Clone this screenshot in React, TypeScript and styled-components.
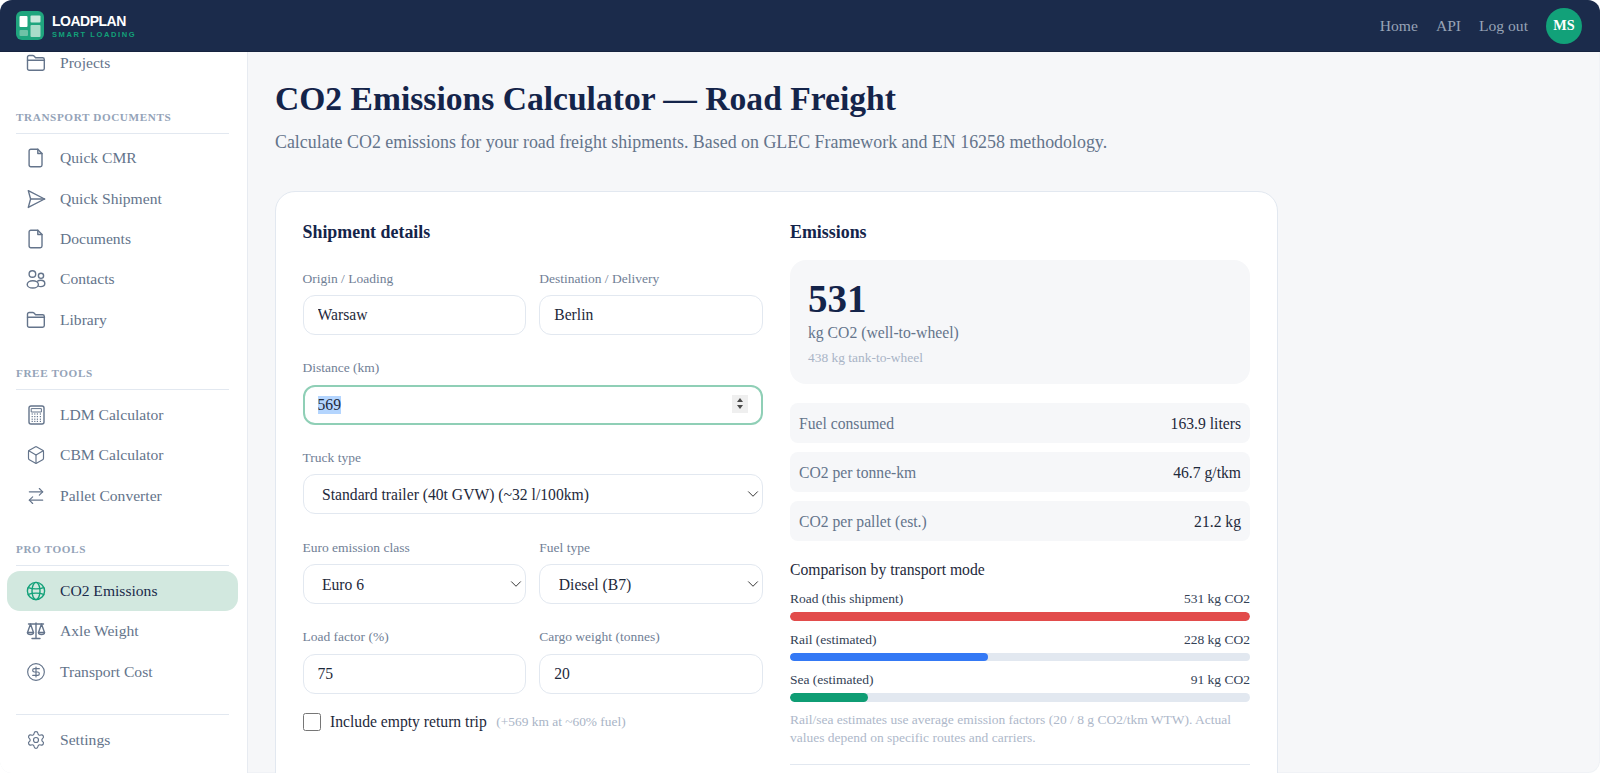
import React, { useEffect, useRef } from 'react'
import styled, { createGlobalStyle } from 'styled-components'
import { ArrowRightLeft, Box, ChevronDown, CircleDollarSign, Settings } from 'lucide-react'

const GlobalStyle = createGlobalStyle`
html, body {
  margin: 0;
  padding: 0;
  height: 100%;
  background: #ffffff;
}
* {
  box-sizing: border-box;
}
::selection {
  background: #b4d5fe;
}
`

const serif = `"Liberation Serif", "Times New Roman", serif`

const Frame = styled.div`
height: 100vh;
display: flex;
flex-direction: column;
overflow: hidden;
border-radius: 12px;
font-family: ${serif};
background: #f6f7f9;
box-shadow: inset 0 0 0 1px rgba(226, 232, 240, 0.3);
`

const TopBar = styled.header`
height: 52px;
flex-shrink: 0;
display: flex;
align-items: center;
justify-content: space-between;
padding: 0 18px 0 16px;
background: #1b2b4b;
border-bottom: 1px solid #16233f;
`

const Brand = styled.div`
display: flex;
align-items: center;
gap: 8px;
`

const BrandText = styled.div`
display: flex;
flex-direction: column;
padding-top: 1px;
font-family: "Liberation Sans", Arial, sans-serif;
`

const BrandName = styled.span`
font-size: 14px;
line-height: 16px;
font-weight: 700;
letter-spacing: -0.5px;
color: #ffffff;
`

const BrandTag = styled.span`
font-size: 7.5px;
line-height: 10px;
margin-top: 1px;
font-weight: 700;
letter-spacing: 1.6px;
color: #12a179;
`

const TopNav = styled.nav`
display: flex;
align-items: center;
gap: 18px;
`

const TopLink = styled.a`
font-size: 15.6px;
color: #97a3b6;
`

const Avatar = styled.div`
width: 36px;
height: 36px;
border-radius: 50%;
display: flex;
align-items: center;
justify-content: center;
background: #12a179;
color: #ffffff;
font-size: 14.3px;
font-weight: 700;
`

const Body = styled.div`
flex: 1;
min-height: 0;
display: flex;
overflow: hidden;
`

const Sidebar = styled.aside`
width: 248px;
flex-shrink: 0;
background: #ffffff;
border-right: 1px solid #e7ebf1;
padding-top: 0;
margin-top: -9px;
`

const SectionTitle = styled.div`
margin: 25.6px 18px 4.8px 16px;
padding-bottom: 8px;
border-bottom: 1px solid #e2e8f0;
font-size: 11.2px;
line-height: 16px;
font-weight: 700;
letter-spacing: 0.6px;
text-transform: uppercase;
color: #94a3b8;
`

const NavItem = styled.div<{ $active?: boolean }>`
height: 40px;
margin: 0 9px 0.3px 7px;
padding-left: 19px;
display: flex;
align-items: center;
gap: 14px;
border-radius: 13px;
font-size: 15.6px;
background: ${({ $active }) => ($active ? '#d2e8df' : 'transparent')};
color: ${({ $active }) => ($active ? '#1b2b4b' : '#64748b')};
svg {
  color: ${({ $active }) => ($active ? '#12a179' : '#64748b')};
  flex-shrink: 0;
}
`

const SideDivider = styled.div`
height: 1px;
margin: 22px 18px 5.5px 16px;
background: #e2e8f0;
`

const Main = styled.main`
flex: 1;
min-width: 0;
padding: 27px 0 0 27px;
overflow: hidden;
`

const Title = styled.h1`
margin: 0;
font-size: 33.6px;
line-height: 39px;
font-weight: 700;
color: #14244a;
`

const Subtitle = styled.p`
margin: 12px 0 0;
font-size: 17.9px;
line-height: 24px;
color: #64748b;
`

const Card = styled.section`
width: 1003px;
margin-top: 37px;
padding: 30px 26.5px 40px;
display: grid;
grid-template-columns: 460px 460px;
gap: 27.5px;
background: #ffffff;
border: 1px solid #e2e8f0;
border-radius: 20px;
`

const Heading = styled.h2`
margin: 0 0 16.5px;
font-size: 17.9px;
line-height: 21px;
font-weight: 700;
color: #14244a;
`

const Form = styled.div`
padding-top: 10px;
display: flex;
flex-direction: column;
gap: 24.2px;
`

const FieldRow = styled.div`
display: grid;
grid-template-columns: 1fr 1fr;
gap: 13.5px;
`

const Field = styled.label`
display: block;
`

const FieldLabel = styled.span`
display: block;
margin-bottom: 8.5px;
font-size: 13.5px;
line-height: 17px;
color: #718096;
`

const ControlWrap = styled.div`
position: relative;
`

const TextInput = styled.input`
display: block;
width: 100%;
height: 40px;
padding: 0 14px;
border: 1px solid #e2e8f0;
border-radius: 12px;
outline: none;
background: #ffffff;
font-family: ${serif};
font-size: 15.65px;
color: #1e293b;
appearance: textfield;
&:focus {
  border: 2px solid #8fcfb6;
  padding: 0 13px;
}
&::-webkit-inner-spin-button {
  appearance: none;
  margin: 0;
}
`

const Spinner = styled.div`
position: absolute;
top: 10px;
right: 15px;
width: 16px;
height: 18px;
display: flex;
flex-direction: column;
align-items: center;
justify-content: center;
gap: 3px;
background: #efefef;
`

const SpinArrow = styled.span<{ $down?: boolean }>`
width: 0;
height: 0;
border-left: 3px solid transparent;
border-right: 3px solid transparent;
border-${({ $down }) => ($down ? 'top' : 'bottom')}: 4px solid #4a4a4a;
`

const SelectInput = styled.select`
display: block;
width: 100%;
height: 40px;
padding: 0 30px 0 18.5px;
border: 1px solid #e2e8f0;
border-radius: 12px;
appearance: none;
background-color: #ffffff;
font-family: ${serif};
font-size: 15.65px;
color: #1e293b;
`

const SelectArrow = styled.span`
position: absolute;
top: 11px;
right: 1px;
height: 18px;
color: #333333;
pointer-events: none;
`

const CheckRow = styled.label`
margin-top: -4.5px;
display: flex;
align-items: center;
gap: 9.5px;
font-size: 15.65px;
color: #1e293b;
`

const CheckBox = styled.input`
width: 18px;
height: 18px;
margin: 0;
`

const CheckHint = styled.span`
font-size: 13.4px;
color: #a9b4c6;
`

const Hero = styled.div`
height: 124.5px;
padding: 17.5px 18px;
border-radius: 16px;
background: #f6f7f9;
`

const HeroValue = styled.div`
font-size: 39px;
line-height: 44px;
font-weight: 700;
color: #14244a;
`

const HeroUnit = styled.div`
margin-top: 2px;
font-size: 15.7px;
line-height: 20px;
color: #64748b;
`

const HeroSub = styled.div`
margin-top: 7px;
font-size: 13.45px;
line-height: 16px;
color: #a9b4c6;
`

const Stats = styled.div`
margin-top: 19px;
display: flex;
flex-direction: column;
gap: 9px;
`

const StatRow = styled.div`
height: 40px;
padding: 1px 9px 0;
display: flex;
align-items: center;
justify-content: space-between;
border-radius: 8px;
background: #f6f7f9;
font-size: 15.65px;
`

const StatLabel = styled.span`
color: #64748b;
`

const StatValue = styled.span`
color: #1e293b;
`

const CompareTitle = styled.div`
margin: 19px 0 3px;
font-size: 15.7px;
line-height: 20px;
color: #1e293b;
`

const ModeHead = styled.div`
margin-top: 11px;
display: flex;
justify-content: space-between;
font-size: 13.5px;
line-height: 16px;
color: #334155;
`

const Track = styled.div`
height: 8.6px;
margin-top: 5px;
border-radius: 5px;
background: #e2e8f0;
overflow: hidden;
`

const Fill = styled.div<{ $color: string }>`
height: 100%;
border-radius: 5px;
background: ${({ $color }) => $color};
`

const Note = styled.p`
margin: 9px 0 0;
font-size: 13.5px;
line-height: 18.4px;
color: #aeb8ca;
`

const ResultDivider = styled.div`
height: 1px;
margin-top: 16px;
background: #e2e8f0;
`

type IconProps = { children: React.ReactNode }

const Icon = ({ children }: IconProps) => (
  <svg width="20" height="20" viewBox="0 0 20 20" fill="none" stroke="currentColor" strokeWidth="1.4" strokeLinecap="round" strokeLinejoin="round">
    {children}
  </svg>
)

const FolderIcon = () => (
  <Icon>
    <path d="M1.500 4.200a1.700 1.700 0 0 1 1.700-1.700h3.600c.5 0 .9.2 1.200.5l1.600 1.700h7a1.700 1.700 0 0 1 1.700 1.700v9.200a1.700 1.700 0 0 1-1.700 1.700H3.200a1.700 1.700 0 0 1-1.700-1.700z" />
    <path d="M1.500 7.200h17" />
  </Icon>
)

const FileIcon = () => (
  <Icon>
    <path d="M4.800 1.200h7l4.200 4.300v11.600a1.700 1.700 0 0 1-1.700 1.700H4.800a1.700 1.700 0 0 1-1.700-1.700V2.900a1.700 1.700 0 0 1 1.700-1.700z" />
    <path d="M11.800 1.200v4.300H16" />
  </Icon>
)

const SendIcon = () => (
  <Icon>
    <path d="M2.300 1.600 18.600 10 2.300 18.400 4.600 10z" />
    <path d="M4.600 10h14" />
  </Icon>
)

const PeopleIcon = () => (
  <Icon>
    <circle cx="6.400" cy="5" r="3.300" />
    <circle cx="15" cy="6.800" r="2.600" />
    <ellipse cx="6.800" cy="15.400" rx="5.600" ry="3.600" />
    <path d="M11.600 12.200c.9-.6 2-.9 3.200-.9 2.400 0 4 1.400 4 3.200s-1.600 3.100-4 3.100c-1 0-1.800-.2-2.500-.6" />
  </Icon>
)

const CalculatorIcon = () => (
  <Icon>
    <rect x="3" y="1" width="15" height="18" rx="2" />
    <rect x="5.600" y="3.600" width="9.800" height="3.400" strokeWidth="1" />
    {[9, 11.6, 14.2, 16.4].map(y =>
      [6.2, 8.8, 11.4, 14.4].map(x => (
        <rect key={`${x}-${y}`} x={x - 0.6} y={y - 0.6} width="1.2" height="1.2" fill="currentColor" stroke="none" />
      ))
    )}
  </Icon>
)

const GlobeIcon = () => (
  <Icon>
    <circle cx="10" cy="10" r="8.600" />
    <ellipse cx="10" cy="10" rx="4" ry="8.600" />
    <path d="M2.400 6.600c2 .9 4.700 1.300 7.600 1.300s5.600-.4 7.600-1.300" />
    <path d="M2.400 13.400c2-.9 4.700-1.300 7.600-1.300s5.600.4 7.600 1.300" />
  </Icon>
)

const ScalesIcon = () => (
  <Icon>
    <path d="M10 2v15.500M6 17.500h8M2.500 3h15" />
    <path d="M4.500 3 1.500 11.500h6z" />
    <path d="M15.500 3l-3 8.500h6z" />
    <path d="M1.500 11.500c0 1.300 1.300 2 3 2s3-.7 3-2M12.500 11.500c0 1.300 1.300 2 3 2s3-.7 3-2" />
  </Icon>
)

type NavEntry = { label: string; icon: React.ReactNode; active?: boolean }

const documentsNav: NavEntry[] = [
  { label: 'Quick CMR', icon: <FileIcon /> },
  { label: 'Quick Shipment', icon: <SendIcon /> },
  { label: 'Documents', icon: <FileIcon /> },
  { label: 'Contacts', icon: <PeopleIcon /> },
  { label: 'Library', icon: <FolderIcon /> },
]

const freeNav: NavEntry[] = [
  { label: 'LDM Calculator', icon: <CalculatorIcon /> },
  { label: 'CBM Calculator', icon: <Box size={20} strokeWidth={1.4} /> },
  { label: 'Pallet Converter', icon: <ArrowRightLeft size={20} strokeWidth={1.4} /> },
]

const proNav: NavEntry[] = [
  { label: 'CO2 Emissions', icon: <GlobeIcon />, active: true },
  { label: 'Axle Weight', icon: <ScalesIcon /> },
  { label: 'Transport Cost', icon: <CircleDollarSign size={20} strokeWidth={1.4} /> },
]

const stats = [
  { label: 'Fuel consumed', value: '163.9 liters' },
  { label: 'CO2 per tonne-km', value: '46.7 g/tkm' },
  { label: 'CO2 per pallet (est.)', value: '21.2 kg' },
]

const modes = [
  { label: 'Road (this shipment)', value: '531 kg CO2', percent: 100, color: '#e24c4b' },
  { label: 'Rail (estimated)', value: '228 kg CO2', percent: 43, color: '#3479f5' },
  { label: 'Sea (estimated)', value: '91 kg CO2', percent: 17, color: '#0f9d74' },
]

const renderNav = (items: NavEntry[]) =>
  items.map(item => (
    <NavItem key={item.label} $active={item.active}>
      {item.icon}
      {item.label}
    </NavItem>
  ))

const Select = ({ text }: { text: string }) => (
  <ControlWrap>
    <SelectInput defaultValue={text}>
      <option value={text}>{text}</option>
    </SelectInput>
    <SelectArrow>
      <ChevronDown size={18} strokeWidth={1.3} />
    </SelectArrow>
  </ControlWrap>
)

function App() {
  const distanceRef = useRef<HTMLInputElement>(null)

  useEffect(() => {
    distanceRef.current?.focus()
    distanceRef.current?.select()
  }, [])

  return (
    <Frame>
      <GlobalStyle />
      <TopBar>
        <Brand>
          <svg width="28" height="29" viewBox="0 0 28 29">
            <rect width="28" height="29" rx="6" fill="#1fa57e" />
            <rect x="3.500" y="5" width="8" height="11" rx="1" fill="#ffffff" />
            <rect x="14.500" y="4.500" width="10" height="7" rx="1" fill="#c9e8dc" />
            <rect x="3.500" y="19" width="8.500" height="6" rx="1" fill="#6fc2a6" />
            <rect x="14.500" y="14" width="10" height="12" rx="1" fill="#a9dcc9" />
          </svg>
          <BrandText>
            <BrandName>LOADPLAN</BrandName>
            <BrandTag>SMART LOADING</BrandTag>
          </BrandText>
        </Brand>
        <TopNav>
          <TopLink>Home</TopLink>
          <TopLink>API</TopLink>
          <TopLink>Log out</TopLink>
          <Avatar>MS</Avatar>
        </TopNav>
      </TopBar>
      <Body>
        <Sidebar>
          {renderNav([{ label: 'Projects', icon: <FolderIcon /> }])}
          <SectionTitle>Transport documents</SectionTitle>
          {renderNav(documentsNav)}
          <SectionTitle>Free tools</SectionTitle>
          {renderNav(freeNav)}
          <SectionTitle>Pro tools</SectionTitle>
          {renderNav(proNav)}
          <SideDivider />
          {renderNav([{ label: 'Settings', icon: <Settings size={20} strokeWidth={1.4} /> }])}
        </Sidebar>
        <Main>
          <Title>CO2 Emissions Calculator — Road Freight</Title>
          <Subtitle>Calculate CO2 emissions for your road freight shipments. Based on GLEC Framework and EN 16258 methodology.</Subtitle>
          <Card>
            <div>
              <Heading>Shipment details</Heading>
              <Form>
                <FieldRow>
                  <Field>
                    <FieldLabel>Origin / Loading</FieldLabel>
                    <TextInput defaultValue="Warsaw" />
                  </Field>
                  <Field>
                    <FieldLabel>Destination / Delivery</FieldLabel>
                    <TextInput defaultValue="Berlin" />
                  </Field>
                </FieldRow>
                <Field>
                  <FieldLabel>Distance (km)</FieldLabel>
                  <ControlWrap>
                    <TextInput ref={distanceRef} type="number" defaultValue={569} />
                    <Spinner>
                      <SpinArrow />
                      <SpinArrow $down />
                    </Spinner>
                  </ControlWrap>
                </Field>
                <Field>
                  <FieldLabel>Truck type</FieldLabel>
                  <Select text="Standard trailer (40t GVW) (~32 l/100km)" />
                </Field>
                <FieldRow>
                  <Field>
                    <FieldLabel>Euro emission class</FieldLabel>
                    <Select text="Euro 6" />
                  </Field>
                  <Field>
                    <FieldLabel>Fuel type</FieldLabel>
                    <Select text="Diesel (B7)" />
                  </Field>
                </FieldRow>
                <FieldRow>
                  <Field>
                    <FieldLabel>Load factor (%)</FieldLabel>
                    <TextInput type="number" defaultValue={75} />
                  </Field>
                  <Field>
                    <FieldLabel>Cargo weight (tonnes)</FieldLabel>
                    <TextInput type="number" defaultValue={20} />
                  </Field>
                </FieldRow>
                <CheckRow>
                  <CheckBox type="checkbox" />
                  Include empty return trip
                  <CheckHint>(+569 km at ~60% fuel)</CheckHint>
                </CheckRow>
              </Form>
            </div>
            <div>
              <Heading>Emissions</Heading>
              <Hero>
                <HeroValue>531</HeroValue>
                <HeroUnit>kg CO2 (well-to-wheel)</HeroUnit>
                <HeroSub>438 kg tank-to-wheel</HeroSub>
              </Hero>
              <Stats>
                {stats.map(stat => (
                  <StatRow key={stat.label}>
                    <StatLabel>{stat.label}</StatLabel>
                    <StatValue>{stat.value}</StatValue>
                  </StatRow>
                ))}
              </Stats>
              <CompareTitle>Comparison by transport mode</CompareTitle>
              {modes.map(mode => (
                <div key={mode.label}>
                  <ModeHead>
                    <span>{mode.label}</span>
                    <span>{mode.value}</span>
                  </ModeHead>
                  <Track>
                    <Fill $color={mode.color} style={{ width: `${mode.percent}%` }} />
                  </Track>
                </div>
              ))}
              <Note>Rail/sea estimates use average emission factors (20 / 8 g CO2/tkm WTW). Actual values depend on specific routes and carriers.</Note>
              <ResultDivider />
            </div>
          </Card>
        </Main>
      </Body>
    </Frame>
  )
}

export default App
